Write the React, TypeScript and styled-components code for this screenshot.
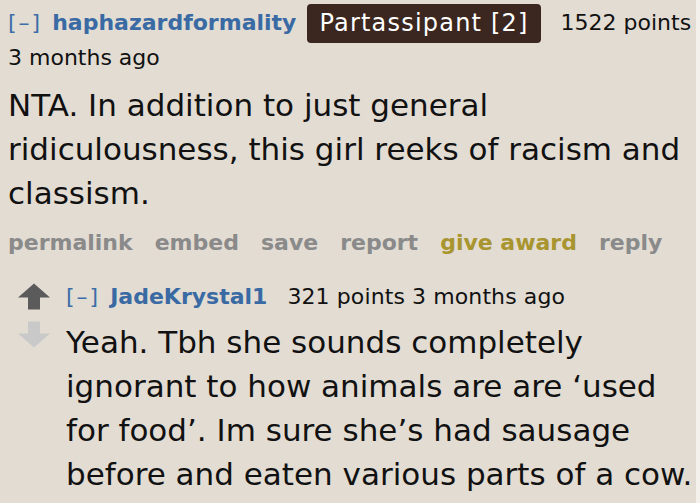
import styled, { createGlobalStyle } from "styled-components";

const GlobalStyle = createGlobalStyle`
  html, body {
    margin: 0;
    padding: 0;
    background: #f4f1ec;
  }
  body {
    font-family: "DejaVu Sans", Verdana, sans-serif;
    color: #111;
  }
`;

function App() {
  return (
    <>
      <GlobalStyle />
      <Page>
        <Comment>
          <Tagline>
            <Toggle>[–]</Toggle>
            <Author>haphazardformality</Author>
            <Flair>Partassipant [2]</Flair>
            <Score>1522 points</Score>
          </Tagline>
          <Time>3 months ago</Time>
          <Body>
            NTA. In addition to just general ridiculousness, this girl reeks of racism and classism.
          </Body>
          <Actions>
            <Action>permalink</Action>
            <Action>embed</Action>
            <Action>save</Action>
            <Action>report</Action>
            <Action $gold>give award</Action>
            <Action>reply</Action>
          </Actions>
        </Comment>
        <Child>
          <Votes>
            <Arrow viewBox="0 0 32 26" $color="#5b5b5b">
              <path d="M16 0 L32 14 L22 14 L22 26 L10 26 L10 14 L0 14 Z" />
            </Arrow>
            <Arrow viewBox="0 0 32 26" $color="#c9c9c9">
              <path d="M10 0 L22 0 L22 12 L32 12 L16 26 L0 12 L10 12 Z" />
            </Arrow>
          </Votes>
          <ChildMain>
            <Tagline>
              <Toggle>[–]</Toggle>
              <Author>JadeKrystal1</Author>
              <Meta>321 points 3 months ago</Meta>
            </Tagline>
            <Body $tight>
              Yeah. Tbh she sounds completely ignorant to how animals are are ‘used for food’. Im sure she’s had sausage before and eaten various parts of a cow.
            </Body>
          </ChildMain>
        </Child>
      </Page>
    </>
  );
}

export default App;

const Page = styled.div`
  width: 696px;
  height: 503px;
  background: #e2dcd3;
  padding: 3px 0 0 8px;
  box-sizing: border-box;
  overflow: hidden;
`;

const Comment = styled.div`
  display: flex;
  flex-direction: column;
`;

const Tagline = styled.div`
  display: flex;
  align-items: center;
  gap: 10px;
  font-size: 22px;
  line-height: 40px;
  white-space: nowrap;
`;

const Toggle = styled.span`
  color: #3c6ea8;
  letter-spacing: 2px;
`;

const Author = styled.span`
  color: #3a6aa3;
  font-weight: bold;
`;

const Flair = styled.span`
  background: #3b2720;
  color: #fff;
  border-radius: 4px;
  padding: 0 12px;
  font-size: 24px;
  letter-spacing: 1.2px;
  line-height: 39px;
  margin-left: 1px;
`;

const Score = styled.span`
  margin-left: 10px;
`;

const Meta = styled.span`
  color: #111;
  margin-left: 10px;
  letter-spacing: 0.1px;
`;

const Time = styled.div`
  font-size: 22px;
  line-height: 30px;
`;

const Body = styled.div<{ $tight?: boolean }>`
  font-size: 31px;
  line-height: 44px;
  margin-top: ${(p) => (p.$tight ? "3px" : "10px")};
`;

const Actions = styled.div`
  display: flex;
  gap: 22px;
  font-size: 22px;
  font-weight: bold;
  line-height: 40px;
  margin-top: 8px;
`;

const Action = styled.span<{ $gold?: boolean }>`
  color: ${(p) => (p.$gold ? "#a8952f" : "#8a8a8a")};
`;

const Child = styled.div`
  display: flex;
  gap: 16px;
  margin-top: 14px;
  padding-left: 10px;
`;

const Votes = styled.div`
  display: flex;
  flex-direction: column;
  gap: 11px;
  padding-top: 6px;
`;

const Arrow = styled.svg<{ $color: string }>`
  width: 32px;
  height: 27px;
  fill: ${(p) => p.$color};
`;

const ChildMain = styled.div`
  display: flex;
  flex-direction: column;
`;
